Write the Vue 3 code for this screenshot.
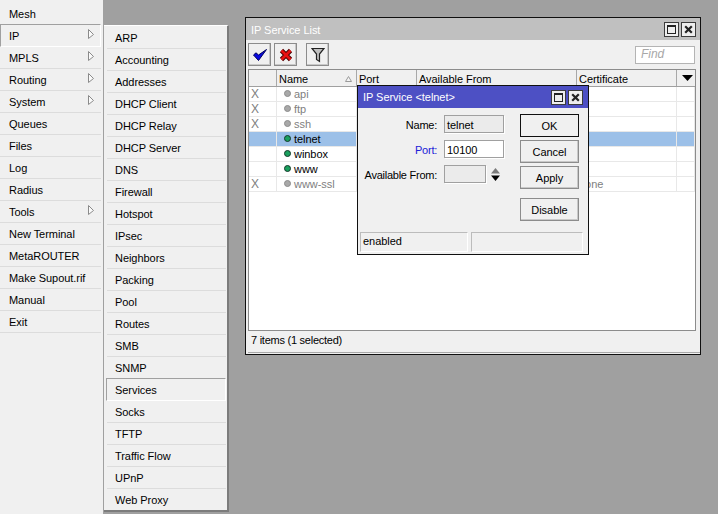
<script setup>
const mainMenu = [
  { label: 'Mesh' },
  { label: 'IP', arrow: true, active: true },
  { label: 'MPLS', arrow: true },
  { label: 'Routing', arrow: true },
  { label: 'System', arrow: true },
  { label: 'Queues' },
  { label: 'Files' },
  { label: 'Log' },
  { label: 'Radius' },
  { label: 'Tools', arrow: true },
  { label: 'New Terminal' },
  { label: 'MetaROUTER' },
  { label: 'Make Supout.rif' },
  { label: 'Manual' },
  { label: 'Exit' },
]
const subMenu = ['ARP', 'Accounting', 'Addresses', 'DHCP Client', 'DHCP Relay', 'DHCP Server', 'DNS', 'Firewall', 'Hotspot', 'IPsec', 'Neighbors', 'Packing', 'Pool', 'Routes', 'SMB', 'SNMP', 'Services', 'Socks', 'TFTP', 'Traffic Flow', 'UPnP', 'Web Proxy']
const rows = [
  { flag: 'X', name: 'api', off: true, cert: '' },
  { flag: 'X', name: 'ftp', off: true, cert: '' },
  { flag: 'X', name: 'ssh', off: true, cert: '' },
  { flag: '', name: 'telnet', selected: true, cert: '' },
  { flag: '', name: 'winbox', cert: '' },
  { flag: '', name: 'www', cert: '' },
  { flag: 'X', name: 'www-ssl', off: true, cert: 'none' },
]
</script>

<template>
  <div class="desktop">
    <nav class="main-menu">
      <div v-for="item in mainMenu" :key="item.label" class="main-item" :class="{ active: item.active }">
        <span>{{ item.label }}</span>
        <svg v-if="item.arrow" class="menu-arrow" width="6" height="10" viewBox="0 0 6 10"><path d="M0.5 0.5 L5.5 5.5 L0.5 9.5 Z" fill="#fafafa" stroke="#8a8a8a" stroke-width="1"/></svg>
      </div>
    </nav>
    <nav class="sub-menu">
      <div v-for="item in subMenu" :key="item" class="sub-item" :class="{ active: item === 'Services' }">{{ item }}</div>
    </nav>

    <section class="win list-win">
      <header class="list-title">
        <span class="title-text">IP Service List</span>
        <div class="title-btns">
          <button class="tbtn"><i class="square"></i></button>
          <button class="tbtn"><svg width="9" height="9" viewBox="0 0 9 9"><path d="M1.2 1.2 L7.8 7.8 M7.8 1.2 L1.2 7.8" stroke="#222" stroke-width="2.2"/></svg></button>
        </div>
      </header>
      <div class="toolbar">
        <button class="tool">
          <svg width="16" height="14" viewBox="0 0 16 14"><path d="M1.5 7 L4 4.8 L6.5 7 L14.5 1.5 L6.5 12.5 Z" fill="#0808e0" stroke="#00005a" stroke-width="1" stroke-linejoin="round"/></svg>
        </button>
        <button class="tool">
          <svg width="14" height="14" viewBox="0 0 14 14"><path d="M2.5 2.5 L11.5 11.5 M11.5 2.5 L2.5 11.5" stroke="#4a0000" stroke-width="4.6"/><path d="M2.5 2.5 L11.5 11.5 M11.5 2.5 L2.5 11.5" stroke="#e81010" stroke-width="2.8"/></svg>
        </button>
        <button class="tool filter">
          <svg width="14" height="16" viewBox="0 0 14 16"><path d="M1 1.5 H13 L8.5 7 V14.5 L5.5 12.5 V7 Z" fill="#c0c0c0" stroke="#222" stroke-width="1.2"/></svg>
        </button>
        <div class="find">Find</div>
      </div>
      <div class="table">
        <div class="thead">
          <div class="th"></div>
          <div class="th name-head">Name<svg width="7" height="6" viewBox="0 0 7 6"><path d="M3.5 0.5 L6.5 5.5 H0.5 Z" fill="#f4f4f4" stroke="#9a9a9a"/></svg></div>
          <div class="th">Port</div>
          <div class="th">Available From</div>
          <div class="th">Certificate</div>
          <div class="th caret"><svg width="11" height="6" viewBox="0 0 11 6"><path d="M0 0 H11 L5.5 6 Z" fill="#000"/></svg></div>
        </div>
        <div v-for="r in rows" :key="r.name" class="tr" :class="{ off: r.off, selected: r.selected }">
          <div class="td flag">{{ r.flag }}</div>
          <div class="td svc">
            <i class="dot"></i>{{ r.name }}
          </div>
          <div class="td"></div>
          <div class="td"></div>
          <div class="td">{{ r.cert }}</div>
          <div class="td"></div>
        </div>
      </div>
      <footer class="list-status">7 items (1 selected)</footer>
    </section>

    <section class="win dialog">
      <header class="dlg-title">
        <span>IP Service &lt;telnet&gt;</span>
        <div class="title-btns">
          <button class="tbtn"><i class="square"></i></button>
          <button class="tbtn"><svg width="9" height="9" viewBox="0 0 9 9"><path d="M1.2 1.2 L7.8 7.8 M7.8 1.2 L1.2 7.8" stroke="#222" stroke-width="2.2"/></svg></button>
        </div>
      </header>
      <div class="dlg-body">
        <div class="form">
          <div class="field"><label>Name:</label><div class="input ro">telnet</div></div>
          <div class="field"><label class="blue">Port:</label><div class="input">10100</div></div>
          <div class="field">
            <label>Available From:</label>
            <div class="input ro short"></div>
            <svg class="updown" width="9" height="13" viewBox="0 0 9 13"><path d="M4.5 0 L9 5.5 H0 Z" fill="#7a7a7a"/><path d="M0 7.5 H9 L4.5 13 Z" fill="#000"/></svg>
          </div>
        </div>
        <div class="actions">
          <button class="btn primary">OK</button>
          <button class="btn">Cancel</button>
          <button class="btn">Apply</button>
          <button class="btn disable">Disable</button>
        </div>
      </div>
      <footer class="dlg-status">
        <div class="st st-a">enabled</div>
        <div class="st st-b"></div>
      </footer>
    </section>
  </div>
</template>

<style>
html, body { margin: 0; padding: 0; background: #a0a0a0; }
</style>

<style scoped>
.desktop {
  position: relative;
  width: 718px;
  height: 514px;
  overflow: hidden;
  background: #a0a0a0;
  display: flex;
  align-items: flex-start;
  font-family: "Liberation Sans", Arial, sans-serif;
  font-size: 11px;
  letter-spacing: -0.05px;
  color: #000;
}
button { font: inherit; letter-spacing: inherit; color: inherit; padding: 0; margin: 0; }

.main-menu {
  width: 103px;
  height: 514px;
  box-sizing: border-box;
  padding-top: 3px;
  background: #f0f0f0;
  flex: none;
}
.main-item {
  height: 22px;
  box-sizing: border-box;
  padding: 0 0 0 9px;
  margin-right: 2px;
  display: flex;
  align-items: center;
  justify-content: space-between;
  border-bottom: 1px solid #dcdcdc;
}
.main-item.active {
  background: #f0f0f0;
  border-top: 1px solid #a0a0a0;
  border-left: 1px solid #a0a0a0;
  border-bottom: 1px solid #fff;
  border-right: 1px solid #fff;
  padding-left: 8px;
  margin-top: -1px;
  height: 23px;
}
.menu-arrow { margin-right: 7px; margin-top: -4px; }
.main-item.active .menu-arrow { margin-right: 6px; }
.sub-menu {
  width: 125px;
  flex: none;
  margin: 25px 0 0 1px;
  box-sizing: border-box;
  padding: 1px 1px 0 3px;
  background: #f0f0f0;
  border-top: 1px solid #fff;
  border-right: 2px solid #7c7c7c;
  border-bottom: 2px solid #7c7c7c;
  height: 487px;
}
.sub-item {
  height: 22px;
  box-sizing: border-box;
  padding: 1px 0 0 8px;
  display: flex;
  align-items: center;
  border-bottom: 1px solid #dcdcdc;
}
.sub-item:first-child { padding-top: 0; }
.sub-item:last-child { border-bottom: 0; padding-top: 0; height: 21px; }
.sub-item.active {
  border-top: 1px solid #a0a0a0;
  border-left: 1px solid #a0a0a0;
  border-bottom: 1px solid #fff;
  border-right: 1px solid #fff;
  padding: 1px 0 0 8px;
  margin: -1px 0 0 -1px;
  height: 23px;
}

.win {
  position: absolute;
  box-sizing: border-box;
  border: 1px solid #101010;
  background: #f0f0f0;
  display: flex;
  flex-direction: column;
}
.list-win { left: 245px; top: 17px; width: 456px; height: 338px; }
.list-title {
  height: 22px;
  flex: none;
  background: #c0c0c0;
  color: #fff;
  display: flex;
  align-items: center;
  justify-content: space-between;
  padding: 0 4px 0 5px;
}
.title-text { padding-top: 2px; }
.title-btns { display: flex; gap: 2px; }
.tbtn {
  width: 15px;
  height: 15px;
  box-sizing: border-box;
  border: 1px solid #3c3c3c;
  background: #eee;
  display: flex;
  align-items: center;
  justify-content: center;
}
.square { display: block; width: 9px; height: 9px; box-sizing: border-box; border: 1px solid #222; border-top-width: 2px; }
.toolbar {
  height: 29px;
  flex: none;
  display: flex;
  align-items: center;
  gap: 3px;
  padding-left: 2px;
  box-sizing: border-box;
  background: #f0f0f0;
}
.tool {
  width: 23px;
  height: 23px;
  box-sizing: border-box;
  border: 1px solid #8c8c8c;
  background: #f0f0f0;
  box-shadow: inset -1px -1px 0 #c8c8c8;
  display: flex;
  align-items: center;
  justify-content: center;
}
.filter { margin-left: 6px; }
.find {
  margin-left: auto;
  margin-right: 5px;
  width: 60px;
  height: 18px;
  box-sizing: border-box;
  border: 1px solid #b4b4b4;
  background: #fff;
  color: #a8a8a8;
  font-style: italic;
  font-size: 12px;
  line-height: 15px;
  padding-left: 5px;
}
.table {
  flex: 1;
  margin: 0 4px 0 2px;
  box-sizing: border-box;
  border: 1px solid #8c8c8c;
  background: #fff;
}
.thead, .tr {
  display: grid;
  grid-template-columns: 28px 80px 60px 160px 100px 18px;
}
.thead { height: 17px; border-bottom: 1px solid #a0a0a0; box-sizing: border-box; background: #f0f0f0; }
.th {
  border-right: 1px solid #a8a8a8;
  padding: 2px 0 0 2px;
  display: flex;
  align-items: center;
  overflow: hidden;
  white-space: nowrap;
}
.name-head { justify-content: space-between; padding-right: 4px; }
.caret { justify-content: center; padding: 0 0 0 2px; border-right: 0; }
.tr { height: 15px; box-sizing: border-box; border-bottom: 1px solid #e8e8e8; }
.td {
  border-right: 1px solid #e8e8e8;
  display: flex;
  align-items: center;
  padding-left: 2px;
  overflow: hidden;
  white-space: nowrap;
}
.tr.off { color: #808080; }
.tr.selected { background: #9cc0e8; }
.flag { padding-left: 2px; font-size: 12px; }
.svc { padding-left: 7px; }
.dot {
  display: block;
  width: 7px;
  height: 7px;
  box-sizing: border-box;
  margin-right: 3px;
  margin-top: -2px;
  border-radius: 50%;
  background: #1aa05e;
  border: 1px solid #14382a;
}
.off .dot { background: #a8a8a8; border-color: #8c8c8c; }
.list-status {
  height: 22px;
  flex: none;
  box-sizing: border-box;
  display: flex;
  align-items: center;
  margin: 0 0 1px 2px;
  padding: 0 0 3px 3px;
  letter-spacing: -0.25px;
  border-bottom: 1px solid #a8a8a8;
}

.dialog { left: 357px; top: 85px; width: 232px; height: 170px; }
.dlg-title {
  height: 22px;
  flex: none;
  background: #4d50c4;
  color: #fff;
  display: flex;
  align-items: center;
  justify-content: space-between;
  padding: 0 5px;
}
.dlg-body { flex: 1; display: flex; justify-content: space-between; padding: 6px 9px 0 0; }
.form { display: flex; flex-direction: column; gap: 7px; padding-top: 1px; }
.field { display: flex; align-items: center; gap: 7px; height: 18px; }
.field label { width: 79px; padding-top: 1px; text-align: right; white-space: nowrap; flex: none; letter-spacing: -0.25px; }
.blue { color: #2020d8; }
.input {
  width: 60px;
  height: 18px;
  box-sizing: border-box;
  border: 1px solid #a0a0a0;
  background: #fff;
  padding: 1px 0 0 2px;
  line-height: 16px;
  box-shadow: 1px 1px 0 #fff;
}
.input.ro { background: #ebebeb; }
.short { width: 42px; }
.updown { margin-left: -2px; }
.actions { display: flex; flex-direction: column; gap: 3px; }
.btn {
  width: 59px;
  height: 23px;
  box-sizing: border-box;
  border: 1px solid #8c8c8c;
  background: #f0f0f0;
  box-shadow: inset -1px -1px 0 #c8c8c8;
}
.btn.primary { border-color: #101010; box-shadow: none; }
.btn.disable { margin-top: 6px; }
.dlg-status { height: 22px; flex: none; display: flex; gap: 3px; padding: 0 5px 2px 2px; box-sizing: border-box; }
.st { box-sizing: border-box; border: 1px solid #bcbcbc; border-bottom-color: #fff; border-right-color: #fff; padding-left: 2px; line-height: 17px; }
.st-a { width: 108px; }
.st-b { flex: 1; }
</style>
